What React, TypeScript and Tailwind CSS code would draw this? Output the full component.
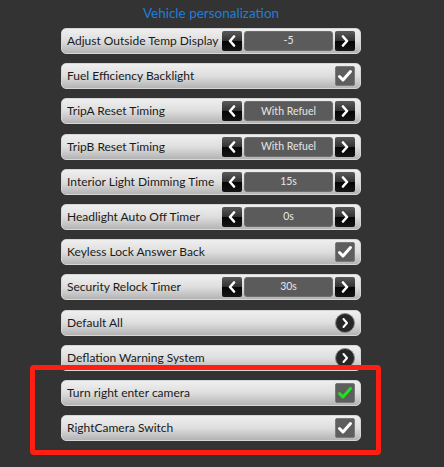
import React from "react";

type Row =
  | { label: string; kind: "step"; value: string }
  | { label: string; kind: "check"; green?: boolean }
  | { label: string; kind: "go" };

const rows: Row[] = [
  { label: "Adjust Outside Temp Display", kind: "step", value: "-5" },
  { label: "Fuel Efficiency Backlight", kind: "check" },
  { label: "TripA Reset Timing", kind: "step", value: "With Refuel" },
  { label: "TripB Reset Timing", kind: "step", value: "With Refuel" },
  { label: "Interior Light Dimming Time", kind: "step", value: "15s" },
  { label: "Headlight Auto Off Timer", kind: "step", value: "0s" },
  { label: "Keyless Lock Answer Back", kind: "check" },
  { label: "Security Relock Timer", kind: "step", value: "30s" },
  { label: "Default All", kind: "go" },
  { label: "Deflation Warning System", kind: "go" },
  { label: "Turn right enter camera", kind: "check", green: true },
  { label: "RightCamera Switch", kind: "check" },
];

const Chevron = ({ left }: { left?: boolean }) => (
  <svg width="10" height="12" viewBox="0 0 10 12">
    <polyline
      points={left ? "7,1.5 3,6 7,10.5" : "3,1.5 7,6 3,10.5"}
      fill="none"
      stroke="white"
      strokeWidth="2.6"
      strokeLinecap="round"
      strokeLinejoin="round"
    />
  </svg>
);

const ArrowBtn = ({ left }: { left?: boolean }) => (
  <div className="flex h-[20px] w-[20px] items-center justify-center rounded-[2px] bg-[linear-gradient(to_bottom,#5a5a5a_0%,#333_48%,#050505_52%,#151515_100%)]">
    <Chevron left={left} />
  </div>
);

const Check = ({ green }: { green?: boolean }) => (
  <div className="flex h-[20px] w-[20px] items-center justify-center rounded-[2px] border border-[#7a7a7a] bg-[#5e5e5e]">
    <svg width="16" height="14" viewBox="0 0 16 14">
      <polyline
        points="2.5,7.5 6,11 13.5,2.5"
        fill="none"
        stroke={green ? "#1ee21e" : "white"}
        strokeWidth="3"
        strokeLinecap="round"
        strokeLinejoin="round"
      />
    </svg>
  </div>
);

const Go = () => (
  <div className="flex h-[20px] w-[20px] items-center justify-center rounded-full border border-[#888] bg-[#262626]">
    <svg width="10" height="12" viewBox="0 0 10 12">
      <polyline points="3.5,2 7,6 3.5,10" fill="none" stroke="white" strokeWidth="2" strokeLinecap="round" strokeLinejoin="round" />
    </svg>
  </div>
);

export default function App() {
  return (
    <div className="relative h-[467px] w-[444px] overflow-hidden bg-[#333333] font-['Lato',sans-serif]">
      <div className="ml-[61px] flex w-[300px] flex-col">
        <div className="flex h-[28px] items-center justify-center pb-[1px] text-[13.5px] text-[#1f7ddc]">
          Vehicle personalization
        </div>
        <div className="flex flex-col gap-[9.2px]">
          {rows.map((r, i) => (
            <div
              key={i}
              className="flex h-[26px] items-center justify-between rounded-[5px] border border-[#d6d6d6] bg-linear-to-b from-[#efefef] via-[#dedede] to-[#b4b4b4] pl-[5px] pr-[5px]"
            >
              <span className="whitespace-nowrap text-[12px] leading-none text-[#1a1a1a]">{r.label}</span>
              {r.kind === "step" && (
                <div className="flex items-center gap-[2px]">
                  <ArrowBtn left />
                  <div className="flex h-[20px] w-[89px] items-center justify-center rounded-[3px] border border-[#6e6e6e] bg-[#5b5b5b] text-[10.5px] text-[#e6e6e6]">
                    {r.value}
                  </div>
                  <ArrowBtn />
                </div>
              )}
              {r.kind === "check" && <Check green={r.green} />}
              {r.kind === "go" && <Go />}
            </div>
          ))}
        </div>
      </div>
      <div className="absolute left-[30px] top-[365px] h-[90px] w-[351px] rounded-[4px] border-[5px] border-[#ff1e12]" />
    </div>
  );
}
